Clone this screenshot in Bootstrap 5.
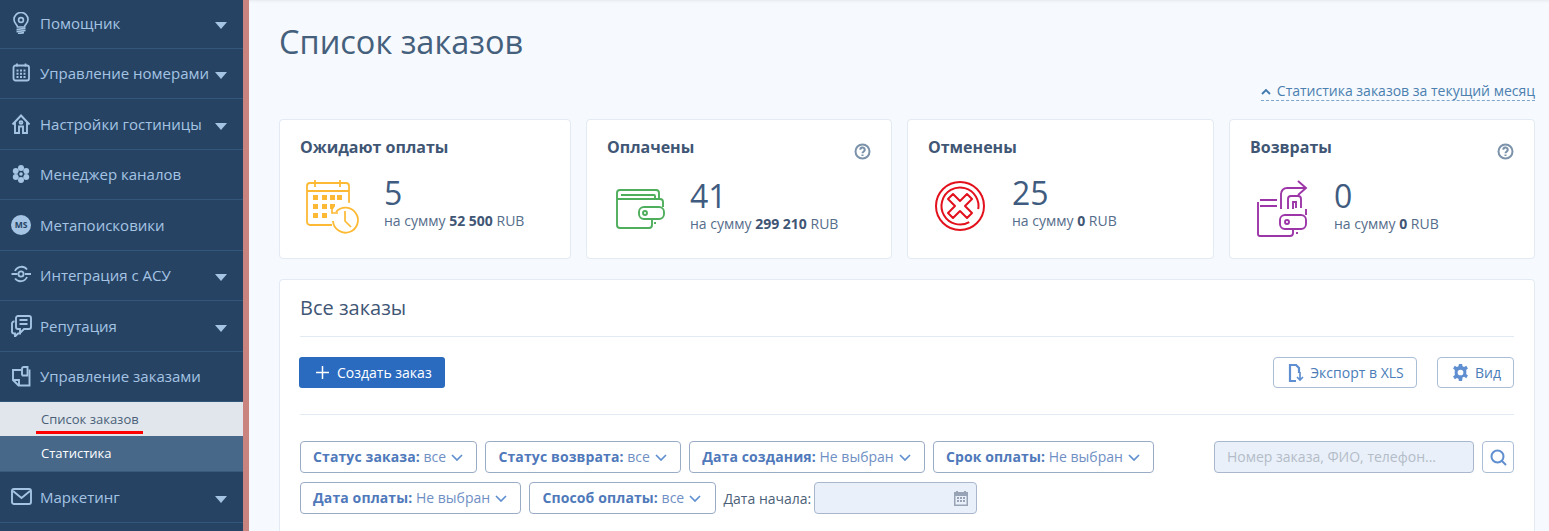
<!DOCTYPE html>
<html lang="ru">
<head>
<meta charset="utf-8">
<title>Список заказов</title>
<link href="https://cdn.jsdelivr.net/npm/bootstrap@5.3.0/dist/css/bootstrap.min.css" rel="stylesheet">
<style>
html,body{height:531px;overflow:hidden;background:#f6f9fd;font-family:"Open Sans",sans-serif;color:#3f5675}
.shell{height:531px}
.side{width:249px;flex:none;background:#264363;border-right:6px solid #c98480;overflow:hidden}
.side-in{margin-top:-2px}
.s-item{height:50.5px;border-bottom:1px solid #34587c;color:#a5c4e3;font-size:15px;padding-left:11px;padding-right:16px}
.s-ico{width:21px;height:22px;margin-right:8px;flex:none;color:#a5c4e3}
.s-ico svg{display:block}
.s-label{flex:1;white-space:nowrap}
.s-caret{width:0;height:0;border-left:6px solid transparent;border-right:6px solid transparent;border-top:7px solid #a5c4e3;margin-top:5px;flex:none}
.s-ms{width:20px;height:20px;border-radius:50%;background:#a5c4e3;color:#264363;font-size:8.5px;font-weight:700;line-height:20px;text-align:center;letter-spacing:-.2px}
.s-sub{height:34px;padding-left:41px;padding-top:2px;font-size:13px;background:#e0e6ec;color:#4b5f78}
.s-sub span{position:relative}
.s-sub span::after{content:"";position:absolute;left:-5px;right:-4px;bottom:-4px;height:3px;background:#f00}
.s-sub2{height:36px;padding-left:41px;padding-top:1px;font-size:13px;font-weight:500;background:#48688a;color:#fff;border-bottom:1px solid #3a5a7c}
.main{flex:1;min-width:0;padding:0 14px 0 30px;box-shadow:inset 0 3px 3px -2px #e4e8ee}
.page-h{font-size:32.5px;font-weight:400;color:#44607c;line-height:44px;margin:20px 0 0}
.stat-wrap{height:55px;padding-top:20px}
.stat-link{font-size:14px;color:#4a7fb0;border-bottom:1px dashed #7ea6cc;line-height:18px;height:19px;margin-top:-2px;gap:6px}
.cards{display:grid;grid-template-columns:292fr 306fr 307fr 306fr;gap:15px;height:140px}
.stat-card{background:#fff;border:1px solid #e2eaf4;border-radius:4px;padding:17px 20px 0}
.stat-t{font-size:16px;font-weight:700;color:#3f5675;line-height:20px}
.q-ico{margin-top:6px}
.stat-body{margin-top:17px;padding-left:5px}
.stat-ico{width:79px;height:56px;flex:none;margin-top:1px}
.stat-ico-b{width:78px}
.stat-ico svg{display:block;overflow:visible}
.stat-n{font-size:32px;line-height:36px;padding-top:1px;color:#3f5c80;font-weight:400}
.stat-s{font-size:14px;line-height:19px;color:#556d8b}
.stat-s b{color:#3f5675}
.panel{background:#fff;border:1px solid #e2eaf4;border-radius:4px 4px 0 0;margin-top:20px;padding:0 20px;height:300px}
.panel-t{font-size:20px;font-weight:400;color:#3f5675;line-height:24px;padding:16px 0;border-bottom:1px solid #e2eaf4;margin:0}
.tool-row{height:78px;border-bottom:1px solid #e2eaf4;padding-top:20px}
.btn-new{background:#2a6bbf;color:#fff;font-size:14px;height:31px;width:146px;border:0;border-radius:3px;padding:0 0 0 17px;display:flex;align-items:center;gap:8px;margin-left:-1px}
.btn-line{background:#fff;border:1px solid #a9bdd6;border-radius:4px;color:#4a7cb8;font-size:14px;height:31px;display:flex;align-items:center;padding:0;justify-content:center;gap:6px}
.btn-xls{width:144px;margin-right:20px;padding-left:2px}
.btn-view{width:77px;padding-left:2px}
.filters{margin-top:26px}
.f-rows{width:880px;gap:9px}
.f-chip{background:#fff;border:1px solid #9aabc6;border-radius:4px;height:32px;padding:0 13.3px 2px 12px;color:#6f8fc4;font-size:14px;display:flex;align-items:center;white-space:nowrap;gap:5px;flex:none}
.f-chip b{font-weight:700;color:#4f79ba;letter-spacing:.12px}
.f-chip svg{margin-top:2px}
.f-row{gap:8px}
.f-lab{font-size:14px;color:#4c5f78;white-space:nowrap}
.f-date{width:163px;height:32px;background:#e9f0f9;border:1px solid #a9b7cd;border-radius:4px;padding-right:8px;margin-left:-5px}
.f-search{width:260px;height:32px;background:#e9f0f9;border:1px solid #a9b7cd;border-radius:4px;padding:0 12px;font-size:14px;color:#b4bcc8;white-space:nowrap;line-height:30px}
.f-sbtn{width:32px;height:32px;background:#fff;border:1px solid #a9bdd6;border-radius:4px;margin-left:8px}
</style>
</head>
<body>
<div class="shell d-flex">
<nav class="side">
<div class="side-in">
<div class="s-item d-flex align-items-center"><span class="s-ico"><svg width="21" height="22" viewBox="0 0 21 22" fill="none" stroke="currentColor" stroke-width="1.700"><path d="M6.500 15c0-2.500-3.500-3.500-3.500-7.500a7 7 0 0 1 14 0c0 4-3.500 5-3.500 7.500z"/><circle cx="10" cy="8" r="2.400"/><path d="M5.500 17.500l9-1.200M5.500 19.700l9-1.200M7 21.500l6-.8"/></svg></span><span class="s-label">Помощник</span><span class="s-caret"></span></div>
<div class="s-item d-flex align-items-center"><span class="s-ico"><svg width="21" height="22" viewBox="0 0 21 22" fill="none" stroke="currentColor" stroke-width="1.800"><rect x="2.500" y="3.500" width="15.500" height="15" rx="2"/><path d="M6 1.500v3M14.500 1.500v3"/><path stroke-width="2" stroke-dasharray="2 1.500" d="M5.500 8.500h10M5.500 11.700h10M5.500 15h10"/></svg></span><span class="s-label">Управление номерами</span><span class="s-caret"></span></div>
<div class="s-item d-flex align-items-center"><span class="s-ico"><svg width="21" height="22" viewBox="0 0 21 22" fill="none" stroke="currentColor" stroke-width="1.900"><path d="M1.500 11.500l8.500-9 8.500 9M4 9v11h4v-6.500h4V20h4V9"/><circle cx="10" cy="9.500" r="1.400"/></svg></span><span class="s-label">Настройки гостиницы</span><span class="s-caret"></span></div>
<div class="s-item d-flex align-items-center"><span class="s-ico"><svg width="21" height="22" viewBox="0 0 21 22" fill="currentColor"><circle cx="10" cy="5" r="3"/><circle cx="10" cy="17" r="3"/><circle cx="4.800" cy="8" r="3"/><circle cx="15.200" cy="8" r="3"/><circle cx="4.800" cy="14" r="3"/><circle cx="15.200" cy="14" r="3"/><circle cx="10" cy="11" r="3" fill="#264363"/><circle cx="10" cy="11" r="1.800"/></svg></span><span class="s-label">Менеджер каналов</span></div>
<div class="s-item d-flex align-items-center"><span class="s-ico d-flex align-items-center"><span class="s-ms">MS</span></span><span class="s-label">Метапоисковики</span></div>
<div class="s-item d-flex align-items-center"><span class="s-ico"><svg width="21" height="22" viewBox="0 0 21 22" fill="none" stroke="currentColor" stroke-width="1.800"><circle cx="10" cy="10" r="2.600"/><path d="M4 7a7 7 0 0 1 12-1.500M16 13a7 7 0 0 1-12 1.500M.5 10h6M14 10h6"/></svg></span><span class="s-label">Интеграция с АСУ</span><span class="s-caret"></span></div>
<div class="s-item d-flex align-items-center"><span class="s-ico"><svg width="21" height="22" viewBox="0 0 21 22" fill="none" stroke="currentColor" stroke-width="1.900"><path d="M5 3a2 2 0 0 1 2-2h11a2 2 0 0 1 2 2v9a2 2 0 0 1-2 2h-5l-3 3h-1V14H7a2 2 0 0 1-2-2zM8.500 5h8M8.500 9h8"/><path d="M3.500 6.500H3a2 2 0 0 0-2 2v8c0 1 1 2 2 2h1v3l3-3h3"/></svg></span><span class="s-label">Репутация</span><span class="s-caret"></span></div>
<div class="s-item d-flex align-items-center"><span class="s-ico"><svg width="21" height="22" viewBox="0 0 21 22" fill="none" stroke="currentColor" stroke-width="1.900"><path d="M10 5H2v10l5.500 5.500H18.500V4.500M8 20v-5H2"/><path d="M11 10.500V4a2 2 0 0 1 2-2h3.500v8.500h-5.500"/></svg></span><span class="s-label">Управление заказами</span></div>
<div class="s-sub d-flex align-items-center"><span>Список заказов</span></div>
<div class="s-sub2 d-flex align-items-center">Статистика</div>
<div class="s-item d-flex align-items-center"><span class="s-ico"><svg width="21" height="22" viewBox="0 0 21 22" fill="none" stroke="currentColor" stroke-width="1.900"><rect x="1" y="3" width="19" height="15" rx="2"/><path d="M2 5l8.500 7L19 5"/></svg></span><span class="s-label">Маркетинг</span><span class="s-caret"></span></div>
</div>
</nav>
<main class="main">
<h1 class="page-h">Список заказов</h1>
<div class="stat-wrap d-flex justify-content-end"><span class="stat-link d-inline-flex align-items-center"><svg width="10" height="7" viewBox="0 0 10 7" fill="none" stroke="#3f79ae" stroke-width="1.800"><path d="M1 6l4-4 4 4"/></svg>Статистика заказов за текущий месяц</span></div>
<section class="cards">
<div class="stat-card">
<div class="stat-t">Ожидают оплаты</div>
<div class="stat-body d-flex">
<span class="stat-ico"><svg width="56" height="56" viewBox="0 0 56 56" fill="none" stroke="#fdb933" stroke-width="1.800"><path d="M27 50H5a3 3 0 0 1-3-3V11a3 3 0 0 1 3-3h36a3 3 0 0 1 3 3v21M2 16h42M10 5v7M35 5v7M10 8h25"/><path fill="#fdb933" stroke="none" d="M8 20h5v5H8zM17 20h5v5h-5zM25 20h5v5h-5zM32 20h5v5h-5zM8 29h5v5H8zM17 29h5v5h-5zM25 29h5v5h-5zM8 38h5v5H8zM17 38h5v5h-5z"/><path fill="#fff" stroke="none" d="M27 36a14 14 0 1 0 26 0 14 14 0 0 0-26 0z"/><path d="M31 37a12.500 12.500 0 1 1-3 9"/><path d="M40 36v10l6 6M27 32v6h6" stroke-width="1.700"/></svg></span>
<div><div class="stat-n">5</div><div class="stat-s">на сумму <b>52 500</b> RUB</div></div>
</div></div>
<div class="stat-card">
<div class="d-flex justify-content-between"><div class="stat-t">Оплачены</div><svg class="q-ico" width="17" height="17" viewBox="0 0 17 17" fill="none" stroke="#7b92aa" stroke-width="2"><circle cx="8.500" cy="8.500" r="7"/><path d="M6.300 6.700a2.200 2.200 0 1 1 3.300 1.900c-.8.500-1.100.9-1.100 1.700M8.500 11.500v1.500"/></svg></div>
<div class="stat-body d-flex">
<span class="stat-ico stat-ico-b"><svg width="56" height="56" viewBox="0 0 56 56" fill="none" stroke="#4fae5c" stroke-width="1.900"><path d="M5 21v-6a3 3 0 0 1 3-3h36a3 3 0 0 1 3 3v6M9 17h33a1 1 0 0 1 1 1v3"/><path d="M5 21h43a3 3 0 0 1 3 3v5M5 21v26a3 3 0 0 0 3 3h29a3 3 0 0 0 3-3v-6"/><rect x="27" y="29" width="25" height="12" rx="5"/><circle cx="33" cy="35" r="2"/><path d="M43 44v2"/></svg></span>
<div><div class="stat-n">41</div><div class="stat-s">на сумму <b>299 210</b> RUB</div></div>
</div></div>
<div class="stat-card">
<div class="stat-t">Отменены</div>
<div class="stat-body d-flex">
<span class="stat-ico"><svg width="56" height="56" viewBox="0 0 56 56" fill="none" stroke="#e2111c" stroke-width="2"><circle cx="27" cy="31" r="24"/><circle cx="27" cy="31" r="18.500" pathLength="100" stroke-dasharray="86 14" transform="rotate(60 27 31)"/><path stroke-linejoin="round" d="M27 26l7-7 5 5-7 7 7 7-5 5-7-7-7 7-5-5 7-7-7-7 5-5z"/></svg></span>
<div><div class="stat-n">25</div><div class="stat-s">на сумму <b>0</b> RUB</div></div>
</div></div>
<div class="stat-card">
<div class="d-flex justify-content-between"><div class="stat-t">Возвраты</div><svg class="q-ico" width="17" height="17" viewBox="0 0 17 17" fill="none" stroke="#7b92aa" stroke-width="2"><circle cx="8.500" cy="8.500" r="7"/><path d="M6.300 6.700a2.200 2.200 0 1 1 3.300 1.900c-.8.500-1.100.9-1.100 1.700M8.500 11.500v1.500"/></svg></div>
<div class="stat-body d-flex">
<span class="stat-ico"><svg width="56" height="56" viewBox="0 0 56 56" fill="none" stroke="#9c36a8" stroke-width="1.900"><path d="M43 3l8 7-8 7M51 10H32a6 6 0 0 0-6 6v15M33 31V21a3 3 0 0 1 3-3h7a3 3 0 0 1 3 3v9M38 31v-7h3v6"/><path d="M5 22h17M5 28h17M3 24v32a2 2 0 0 0 2 2h30a3 3 0 0 0 3-3v-4M51 31v6"/><rect x="25" y="37" width="26" height="14" rx="5"/><circle cx="32" cy="44" r="2"/><path d="M42 54v2"/></svg></span>
<div><div class="stat-n">0</div><div class="stat-s">на сумму <b>0</b> RUB</div></div>
</div></div>
</section>
<section class="panel">
<h2 class="panel-t">Все заказы</h2>
<div class="tool-row d-flex justify-content-between align-items-start">
<button class="btn-new" type="button"><svg width="13" height="13" viewBox="0 0 13 13" stroke="#fff" stroke-width="1.500"><path d="M6.500 0v13M0 6.500h13"/></svg>Создать заказ</button>
<div class="d-flex">
<div class="btn-line btn-xls"><svg width="16" height="18" viewBox="0 0 16 18" fill="none" stroke="#5f8fd0" stroke-width="2.200"><path d="M8 17H2V1h6l3 3v5"/><path d="M12 8v8M9 13l3 3 3-3" stroke-width="1.700"/></svg>Экспорт в XLS</div>
<div class="btn-line btn-view"><svg width="17" height="17" viewBox="0 0 16 16"><path fill="#5f8fd0" fill-rule="evenodd" d="M6.500 0h3l.4 2.200 1.500.7L13.400 1.700l1.600 2.500-1.700 1.500.2 1.300v1l-.2 1.300 1.700 1.500-1.600 2.500-2-1.200-1.500.7L9.500 16h-3l-.4-2.200-1.500-.7-2 1.200L1 11.800l1.700-1.500L2.500 8l.2-2.300L1 4.200l1.600-2.500 2 1.200 1.500-.7zM8 5.300a2.700 2.700 0 1 0 0 5.400 2.700 2.700 0 0 0 0-5.400z"/></svg>Вид</div>
</div>
</div>
<div class="filters d-flex justify-content-between align-items-start">
<div class="f-rows d-flex flex-column">
<div class="f-row d-flex">
<div class="f-chip"><span><b>Статус заказа:</b> все</span><svg width="12" height="7" viewBox="0 0 12 7" fill="none" stroke="#5f8fd0" stroke-width="1.700"><path d="M1 1l5 5 5-5"/></svg></div>
<div class="f-chip"><span><b>Статус возврата:</b> все</span><svg width="12" height="7" viewBox="0 0 12 7" fill="none" stroke="#5f8fd0" stroke-width="1.700"><path d="M1 1l5 5 5-5"/></svg></div>
<div class="f-chip"><span><b>Дата создания:</b> Не выбран</span><svg width="12" height="7" viewBox="0 0 12 7" fill="none" stroke="#5f8fd0" stroke-width="1.700"><path d="M1 1l5 5 5-5"/></svg></div>
<div class="f-chip"><span><b>Срок оплаты:</b> Не выбран</span><svg width="12" height="7" viewBox="0 0 12 7" fill="none" stroke="#5f8fd0" stroke-width="1.700"><path d="M1 1l5 5 5-5"/></svg></div>
</div>
<div class="f-row d-flex align-items-center">
<div class="f-chip"><span><b>Дата оплаты:</b> Не выбран</span><svg width="12" height="7" viewBox="0 0 12 7" fill="none" stroke="#5f8fd0" stroke-width="1.700"><path d="M1 1l5 5 5-5"/></svg></div>
<div class="f-chip"><span><b>Способ оплаты:</b> все</span><svg width="12" height="7" viewBox="0 0 12 7" fill="none" stroke="#5f8fd0" stroke-width="1.700"><path d="M1 1l5 5 5-5"/></svg></div>
<span class="f-lab">Дата начала:</span>
<div class="f-date d-flex align-items-center justify-content-end"><svg width="14" height="16" viewBox="0 0 14 16" fill="#98a3b5"><path fill-rule="evenodd" d="M2 1h2v1h6V1h2v1h2v14H0V2h2zM1.500 6v8.500h11V6z"/><path d="M3 7h2v2H3zM6 7h2v2H6zM9 7h2v2H9zM3 10h2v2H3zM6 10h2v2H6zM9 10h2v2H9z"/></svg></div>
</div>
</div>
<div class="d-flex">
<div class="f-search">Номер заказа, ФИО, телефон...</div>
<div class="f-sbtn d-flex align-items-center justify-content-center"><svg width="17" height="17" viewBox="0 0 17 17" fill="none" stroke="#5f8fd0" stroke-width="2"><circle cx="7.500" cy="7.500" r="6"/><path d="M12 12l4 4"/></svg></div>
</div>
</div>
</section>
</main>
</div>
</body>
</html>
